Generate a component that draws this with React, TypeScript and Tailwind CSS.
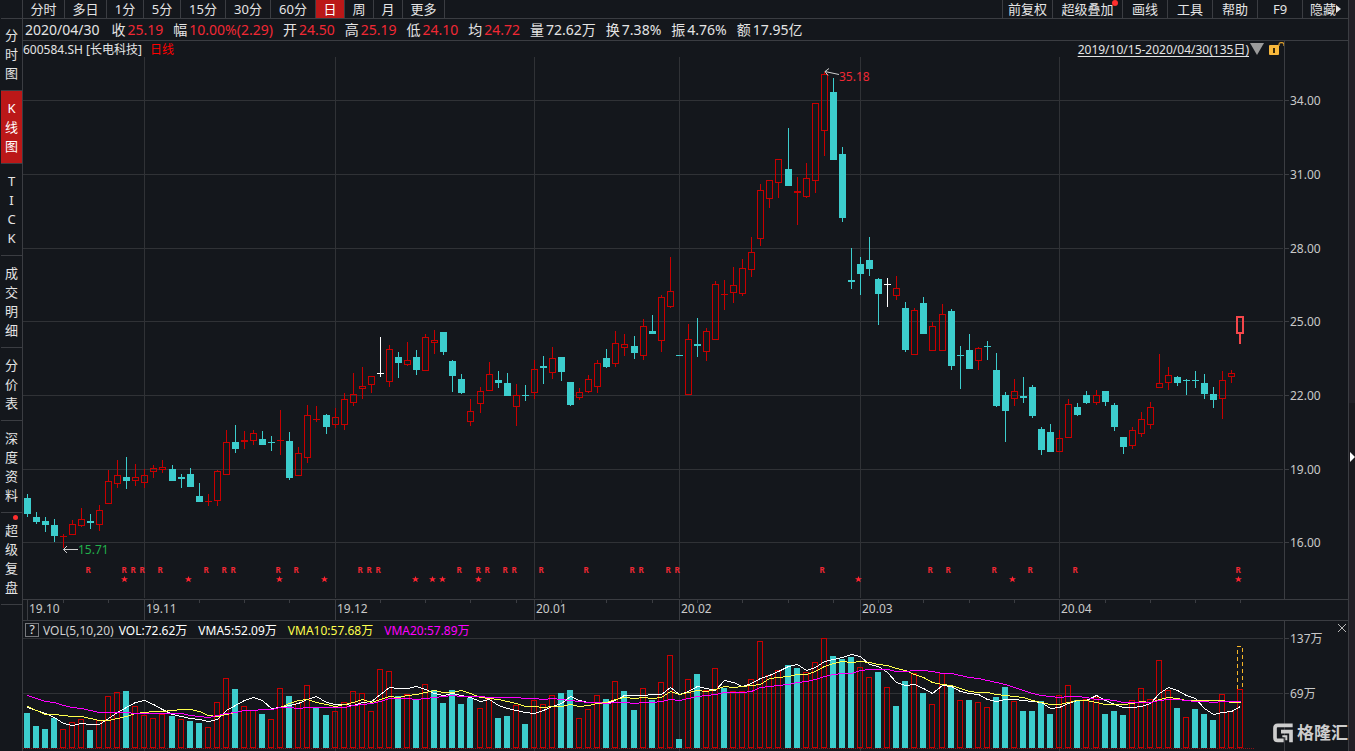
import clsx from "clsx";

type Tone = "r" | "c" | "w";
type Candle = [tone: Tone, high: number, top: number, bottom: number, low: number];

const UP = "#c80000";
const DOWN = "#3ccdcd";
const GRID = "#303236";
const LINE = "#3b3d42";

const toneColor: Record<Tone, string> = { r: UP, c: DOWN, w: "#ffffff" };

const periods = [
  { label: "分时", width: "w-[42px]" },
  { label: "多日", width: "w-[42px]" },
  { label: "1分", width: "w-[37px]" },
  { label: "5分", width: "w-[37px]" },
  { label: "15分", width: "w-[45px]" },
  { label: "30分", width: "w-[45px]" },
  { label: "60分", width: "w-[45px]" },
  { label: "日", width: "w-[29px]", active: true },
  { label: "周", width: "w-[29px]" },
  { label: "月", width: "w-[29px]" },
  { label: "更多", width: "w-[42px]" },
];

const tools = [
  { label: "前复权", width: "w-[50px]" },
  { label: "超级叠加", width: "w-[70px]", dot: true },
  { label: "画线", width: "w-[45px]" },
  { label: "工具", width: "w-[45px]" },
  { label: "帮助", width: "w-[45px]" },
  { label: "F9", width: "w-[45px]" },
  { label: "隐藏", width: "w-[46px]", arrow: true },
];

const views = [
  { label: "分时图" },
  { label: "K线图", active: true },
  { label: "TICK" },
  { label: "成交明细" },
  { label: "分价表" },
  { label: "深度资料" },
  { label: "超级复盘", dot: true },
];

const quotes = [
  { label: "收", value: "25.19", up: true },
  { label: "幅", value: "10.00%(2.29)", up: true },
  { label: "开", value: "24.50", up: true },
  { label: "高", value: "25.19", up: true },
  { label: "低", value: "24.10", up: true },
  { label: "均", value: "24.72", up: true },
  { label: "量", value: "72.62万" },
  { label: "换", value: "7.38%" },
  { label: "振", value: "4.76%" },
  { label: "额", value: "17.95亿" },
];

const candles: Candle[] = [
  ["c", 494, 498, 514, 517], ["c", 512, 517, 522, 524], ["c", 517, 521, 525, 532],
  ["c", 519, 525, 536, 542], ["r", 534, 536, 537, 548], ["r", 520, 524, 535, 535],
  ["r", 508, 519, 526, 527], ["c", 514, 521, 523, 529], ["r", 505, 510, 525, 531],
  ["r", 470, 481, 504, 504], ["r", 460, 475, 484, 488], ["c", 457, 477, 481, 489],
  ["r", 464, 477, 481, 486], ["r", 469, 475, 483, 488], ["r", 465, 468, 472, 478],
  ["r", 460, 467, 470, 473], ["c", 465, 469, 481, 481], ["c", 474, 477, 479, 488],
  ["c", 468, 474, 487, 487], ["c", 483, 496, 502, 502], ["r", 494, 501, 502, 506],
  ["r", 470, 471, 501, 506], ["r", 430, 442, 475, 475], ["c", 425, 442, 449, 453],
  ["r", 431, 440, 442, 449], ["r", 430, 433, 441, 445], ["c", 431, 439, 445, 445],
  ["c", 436, 442, 443, 451], ["r", 410, 440, 441, 455], ["c", 432, 441, 478, 480],
  ["r", 447, 453, 476, 476], ["r", 405, 415, 458, 463], ["r", 406, 419, 420, 422],
  ["c", 414, 415, 427, 434], ["r", 408, 417, 425, 428], ["r", 393, 399, 425, 430],
  ["r", 373, 394, 403, 406], ["r", 367, 386, 389, 399], ["r", 376, 376, 385, 393],
  ["w", 337, 373, 374, 377], ["r", 345, 349, 382, 387], ["c", 352, 357, 363, 378],
  ["r", 342, 360, 365, 366], ["c", 350, 357, 370, 375], ["r", 334, 337, 371, 371],
  ["r", 330, 340, 343, 354], ["c", 332, 332, 352, 355], ["c", 360, 361, 376, 392],
  ["c", 374, 379, 393, 394], ["r", 399, 411, 422, 426], ["r", 387, 391, 404, 413],
  ["r", 362, 374, 391, 391], ["c", 371, 380, 383, 388], ["c", 373, 383, 396, 396],
  ["r", 384, 395, 407, 426], ["c", 385, 395, 396, 401], ["r", 360, 369, 393, 399],
  ["c", 356, 366, 368, 384], ["r", 347, 358, 373, 379], ["c", 357, 357, 372, 381],
  ["c", 382, 382, 405, 406], ["r", 388, 392, 398, 400], ["r", 375, 379, 392, 393],
  ["r", 360, 363, 387, 393], ["c", 349, 358, 367, 368], ["r", 331, 343, 364, 367],
  ["r", 334, 344, 348, 356], ["c", 336, 346, 353, 359], ["r", 319, 326, 356, 360],
  ["c", 315, 331, 334, 334], ["r", 295, 297, 341, 352], ["r", 257, 291, 307, 308],
  ["c", 355, 355, 356, 356], ["r", 324, 339, 395, 395], ["c", 318, 344, 346, 357],
  ["r", 328, 331, 352, 361], ["r", 281, 284, 340, 340], ["r", 280, 294, 295, 310],
  ["r", 267, 285, 293, 303], ["r", 259, 268, 294, 296], ["r", 237, 252, 270, 277],
  ["r", 184, 190, 239, 246], ["r", 180, 180, 199, 208], ["r", 159, 159, 183, 198],
  ["c", 128, 169, 186, 186], ["r", 177, 191, 193, 225], ["r", 163, 178, 197, 198],
  ["r", 103, 103, 181, 193], ["r", 72, 74, 131, 156], ["c", 78, 92, 160, 160],
  ["c", 147, 154, 218, 222], ["c", 248, 280, 282, 289], ["c", 257, 264, 274, 295],
  ["c", 237, 260, 269, 276], ["c", 278, 279, 294, 325], ["w", 278, 284, 285, 307],
  ["r", 276, 288, 296, 300], ["c", 302, 308, 350, 352], ["r", 308, 310, 355, 355],
  ["c", 297, 303, 334, 334], ["r", 322, 326, 351, 351], ["r", 304, 314, 351, 351],
  ["c", 309, 311, 366, 370], ["c", 346, 355, 356, 389], ["c", 334, 350, 369, 369],
  ["r", 347, 348, 361, 370], ["c", 341, 346, 347, 360], ["c", 353, 370, 406, 407],
  ["c", 392, 395, 411, 442], ["r", 379, 391, 399, 406], ["c", 377, 396, 398, 403],
  ["c", 385, 387, 416, 418], ["c", 427, 429, 450, 455], ["c", 424, 432, 452, 452],
  ["r", 430, 438, 452, 452], ["r", 399, 404, 438, 438], ["c", 403, 407, 415, 416],
  ["c", 391, 395, 403, 404], ["r", 390, 395, 403, 405], ["c", 391, 391, 402, 406],
  ["c", 403, 405, 427, 431], ["c", 437, 437, 447, 454], ["r", 427, 430, 446, 449],
  ["r", 412, 419, 434, 437], ["r", 402, 407, 425, 429], ["r", 354, 383, 388, 388],
  ["r", 367, 375, 383, 390], ["c", 376, 377, 383, 386], ["c", 379, 380, 381, 395],
  ["c", 371, 380, 381, 388], ["c", 374, 383, 394, 399], ["c", 387, 394, 400, 408],
  ["r", 371, 380, 399, 419], ["r", 370, 373, 377, 383], ["r", 317, 317, 334, 344],
];

// one letter per session
const volumeTones =
  "cccc" + "rrrc" + "rrrcrrrr" + "crccrrrc" + "rrcrrcrrcc" + "rrrrrrrcrcrcccccrr" +
  "ccrcrrrccrrrcrccrcrrc" + "rcrrcrrrrrrccrrrcccrrcrccrcrrcrcrrcc" + "rccccrrcrrcccrrrrrcrcccrrr";

const volumes = [
  713, 726, 729, 718, 729, 722, 719, 730, 720, 696, 692, 691, 706, 715, 718, 714, 716, 719, 721, 723,
  727, 702, 678, 689, 706, 710, 714, 719, 688, 696, 703, 685, 708, 715, 711, 702, 691, 693, 711, 669,
  671, 696, 694, 699, 684, 690, 703, 690, 704, 698, 708, 698, 718, 716, 705, 724, 700, 704, 695, 693,
  690, 718, 709, 695, 699, 681, 691, 710, 688, 700, 682, 655, 739, 679, 674, 690, 668, 688, 691, 691,
  679, 641, 675, 670, 665, 668, 672, 662, 638, 656, 659, 657, 667, 677, 672, 687, 706, 681, 673, 693,
  704, 673, 686, 700, 700, 702, 707, 697, 687, 701, 711, 711, 701, 714, 695, 685, 700, 699, 697, 714,
  711, 715, 700, 688, 699, 660, 690, 708, 717, 709, 714, 720, 694, 711, 689,
];

const vma5 = [
  707, 710, 713, 717, 723, 725, 723, 724, 724, 718, 712, 707, 702, 700, 704, 709, 714, 716, 718, 719,
  721, 719, 710, 705, 700, 697, 700, 708, 707, 705, 703, 699, 696, 702, 704, 704, 705, 702, 701, 694,
  687, 688, 688, 686, 689, 693, 695, 693, 695, 697, 701, 699, 705, 708, 710, 712, 713, 710, 706, 703,
  696, 700, 702, 702, 703, 700, 695, 695, 695, 694, 694, 687, 694, 691, 686, 688, 690, 680, 682, 686,
  683, 678, 675, 671, 666, 664, 670, 667, 661, 659, 657, 654, 656, 664, 666, 672, 682, 685, 684, 688,
  693, 685, 686, 691, 693, 694, 699, 701, 699, 699, 700, 701, 702, 708, 707, 703, 700, 700, 695, 700,
  704, 707, 707, 706, 703, 693, 687, 690, 695, 698, 708, 714, 712, 711, 706,
];

const vma10 = [
  706, 710, 714, 714, 715, 716, 716, 718, 720, 720, 718, 716, 713, 712, 711, 711, 710, 709, 709, 711,
  715, 716, 714, 712, 710, 710, 709, 709, 707, 703, 700, 699, 702, 704, 706, 704, 702, 699, 702, 699,
  696, 697, 695, 694, 692, 690, 692, 692, 690, 693, 697, 698, 699, 701, 703, 706, 706, 707, 706, 706,
  704, 706, 705, 703, 702, 699, 697, 698, 697, 698, 697, 691, 694, 692, 690, 691, 689, 686, 687, 686,
  685, 684, 678, 677, 676, 674, 674, 671, 666, 663, 661, 662, 661, 662, 664, 665, 668, 670, 674, 677,
  682, 684, 685, 688, 691, 692, 692, 694, 695, 696, 697, 700, 702, 704, 704, 702, 700, 700, 702, 704,
  704, 704, 703, 701, 702, 699, 697, 698, 700, 700, 700, 700, 700, 702, 702,
];

const vma20 = [
  695, 698, 701, 702, 705, 707, 708, 710, 712, 712, 712, 712, 713, 713, 713, 713, 713, 713, 715, 716,
  717, 715, 713, 712, 710, 710, 709, 709, 707, 707, 708, 707, 707, 707, 707, 707, 705, 704, 703, 701,
  698, 698, 698, 699, 698, 697, 696, 695, 696, 696, 696, 697, 697, 697, 697, 698, 698, 699, 698, 699,
  700, 701, 702, 702, 703, 702, 702, 703, 702, 702, 701, 699, 700, 698, 696, 695, 694, 692, 692, 692,
  691, 687, 686, 685, 684, 682, 681, 679, 676, 674, 673, 673, 670, 669, 669, 669, 671, 671, 670, 670,
  671, 673, 673, 675, 677, 678, 680, 682, 684, 687, 690, 693, 695, 696, 697, 696, 696, 697, 699, 699,
  700, 702, 702, 702, 702, 700, 699, 699, 700, 701, 701, 702, 701, 701, 701,
];

const priceLevels = [
  { y: 100, label: "34.00" },
  { y: 174, label: "31.00" },
  { y: 248, label: "28.00" },
  { y: 321, label: "25.00" },
  { y: 395, label: "22.00" },
  { y: 469, label: "19.00" },
  { y: 542, label: "16.00" },
];

const months = [
  { index: 0, label: "19.10" },
  { index: 13, label: "19.11" },
  { index: 34, label: "19.12" },
  { index: 56, label: "20.01" },
  { index: 72, label: "20.02" },
  { index: 92, label: "20.03" },
  { index: 114, label: "20.04" },
];

const reports = [
  88, 124, 133, 142, 160, 206, 224, 233, 278, 296, 360, 369, 378, 459, 478, 487, 505, 514, 541, 586,
  632, 641, 668, 677, 822, 930, 948, 994, 1030, 1075, 1238,
];

const stars = [124, 188, 279, 324, 415, 432, 442, 478, 858, 1012, 1238];

const barX = (i: number) => 27 + 9 * i + Math.floor((i + 1) / 17);

const linePoints = (values: number[]) =>
  values.map((y, i) => `${barX(i) + 0.5},${y + 0.5}`).join(" ");

function Sidebar() {
  return (
    <nav className="w-[23px] shrink-0 border-r border-[#3b3d42] pl-px">
      <div className="h-[19px] border-b border-[#3b3d42]" />
      <div>
        {views.map(({ label, active, dot }) => (
          <button
            key={label}
            className={clsx(
              "relative flex w-full flex-col items-center border-b border-[#3b3d42] pt-2 pb-[7px] text-[13px] leading-[19px] first:pt-[7px]",
              active && "bg-[#bb1818] text-white",
            )}
          >
            {label.split("").map((char, i) => (
              <span key={i}>{char}</span>
            ))}
            {dot ? (
              <span className="absolute top-0.5 right-1 size-[5px] rounded-full bg-[#ff2e2e]" />
            ) : null}
          </button>
        ))}
      </div>
    </nav>
  );
}

function Toolbar() {
  return (
    <div className="flex h-[19px] justify-between border-b border-[#3b3d42] text-[13px] leading-[18px]">
      <div className="flex">
        {periods.map(({ label, width, active }) => (
          <button
            key={label}
            className={clsx(
              "shrink-0 border-r border-[#3b3d42] whitespace-nowrap",
              width,
              active && "bg-[#bb1818] text-white",
            )}
          >
            {label}
          </button>
        ))}
      </div>
      <div className="flex">
        {tools.map(({ label, width, dot, arrow }) => (
          <button
            key={label}
            className={clsx(
              "relative flex shrink-0 items-center justify-center border-l border-[#3b3d42] whitespace-nowrap",
              width,
            )}
          >
            {label}
            {arrow ? (
              <svg viewBox="0 0 5 8" className="h-2 w-[5px]">
                <path d="M0 0 5 4 0 8Z" fill="#e4e4e4" />
              </svg>
            ) : null}
            {dot ? (
              <span className="absolute top-0 right-1 size-1.5 rounded-full bg-[#ff2e2e]" />
            ) : null}
          </button>
        ))}
      </div>
    </div>
  );
}

function QuoteBar() {
  return (
    <div className="flex h-[22px] gap-[10px] border-b border-[#3b3d42] pl-0.5 text-[14px] leading-[22px] whitespace-nowrap">
      <span className="mr-0.5">2020/04/30</span>
      {quotes.map(({ label, value, up }) => (
        <span key={label} className="flex gap-0.5">
          <span>{label}</span>
          <span className={up ? "text-[#f02834]" : ""}>{value}</span>
        </span>
      ))}
    </div>
  );
}

function ChartTitle() {
  return (
    <div className="flex h-4 justify-between text-[12px] leading-[17px] whitespace-nowrap">
      <div className="flex gap-2">
        <span>600584.SH [长电科技]</span>
        <span className="text-[#ff0000]">日线</span>
      </div>
      <div className="flex items-center gap-px pr-[63px]">
        <button className="underline underline-offset-2">2019/10/15-2020/04/30(135日)</button>
        <svg viewBox="0 0 14 12" className="h-3 w-[14px]">
          <path d="M0 0h14L7 12Z" fill="#9b9b9b" />
        </svg>
        <svg viewBox="0 0 16 14" className="ml-1 h-[14px] w-4">
          <path d="M10 4V2.500Q10 .6 12.500 .6T15 2.500V4" fill="none" stroke="#d99c2b" strokeWidth="1.300" />
          <rect x="0" y="3" width="10" height="10" rx="1" fill="#f8b83c" />
          <path d="M4 6h2v5H4Z" fill="#3a2a08" />
        </svg>
      </div>
    </div>
  );
}

function CandleShape({ x, candle }: { x: number; candle: Candle }) {
  const [tone, high, top, bottom, low] = candle;
  const color = toneColor[tone];
  const hollow = tone === "r" && bottom - top > 2;

  return (
    <g fill={color}>
      <rect x={x} y={high} width={1} height={top - high} />
      <rect x={x} y={bottom} width={1} height={low - bottom} />
      {hollow ? (
        <rect x={x - 2.5} y={top + 0.5} width={6} height={bottom - top - 1} fill="none" stroke={color} />
      ) : (
        <rect x={x - 3} y={top} width={7} height={bottom - top} />
      )}
    </g>
  );
}

function PriceChart() {
  const last = candles.length - 1;

  return (
    <svg
      viewBox="23 57 1325 564"
      className="block h-auto w-full overflow-visible text-[12px]"
      shapeRendering="crispEdges"
    >
      {priceLevels.map(({ y, label }) => (
        <g key={label}>
          <rect x={23} y={y} width={1260} height={1} fill={GRID} />
          <rect x={1284} y={y} width={5} height={1} fill={LINE} />
          <text x={1290} y={y + 5} fill="#c9c9c9">{label}</text>
        </g>
      ))}
      {months.map(({ index, label }) => (
        <g key={label}>
          {index > 0 ? <rect x={barX(index)} y={57} width={1} height={541} fill={GRID} /> : null}
          <rect x={barX(index)} y={599} width={1} height={22} fill={LINE} />
          <text x={barX(index) + 2} y={613} fill="#c9c9c9">{label}</text>
        </g>
      ))}
      {candles.map((_, i) =>
        i % 5 === 4 ? <rect key={i} x={barX(i)} y={600} width={1} height={3} fill={LINE} /> : null,
      )}
      <rect x={1284} y={41} width={1} height={558} fill={LINE} />
      <rect x={23} y={599} width={1325} height={1} fill={LINE} />
      <rect x={23} y={620} width={1325} height={1} fill={LINE} />

      {candles.slice(0, last).map((candle, i) => (
        <CandleShape key={i} x={barX(i)} candle={candle} />
      ))}
      <g fill="none" stroke="#f5474b" strokeWidth={2}>
        <rect x={1237} y={317} width={6} height={16} />
        <path d="M1240 334V344" />
      </g>

      <g fill="none" stroke="#d0d0d0" shapeRendering="auto">
        <path d="M839 74.500 825 71.500M829 68.500 825 71.500 828 75.500" />
        <path d="M78 549.500H63.500M67 546 63.500 549.500 67 553" />
      </g>
      <text x={839} y={81} fill="#f02834">35.18</text>
      <text x={78} y={554} fill="#21b04b">15.71</text>

      {reports.map((x) => (
        <text key={x} x={x} y={573} textAnchor="middle" fill="#f02834" className="text-[8px] font-bold">
          R
        </text>
      ))}
      {stars.map((x) => (
        <path
          key={x}
          transform={`translate(${x} 579)`}
          d="M.5-3 1.400-.7H4L2 .8 2.800 3.200.5 1.800-1.800 3.200-1 .8-3-.7H-.4Z"
          fill="#ff2430"
          shapeRendering="auto"
        />
      ))}
    </svg>
  );
}

function VolumeHeader() {
  return (
    <div className="flex h-[17px] items-center justify-between px-0.5 text-[12px] leading-[17px] whitespace-nowrap">
      <div className="flex items-center pt-px">
        <button className="mr-1 size-[14px] border border-[#77797d] leading-3">?</button>
        <span className="mr-[5px] text-[#d0d0d0]">VOL(5,10,20)</span>
        <span className="mr-[11px] text-white">VOL:72.62万</span>
        <span className="mr-[11px] text-white">VMA5:52.09万</span>
        <span className="mr-[11px] text-[#ffff4d]">VMA10:57.68万</span>
        <span className="text-[#ff00ff]">VMA20:57.89万</span>
      </div>
      <button aria-label="关闭" className="pb-[3px]">
        <svg viewBox="0 0 8 8" className="size-2" stroke="#b8b8b8">
          <path d="M0 0 8 8M8 0 0 8" />
        </svg>
      </button>
    </div>
  );
}

function VolumeChart() {
  return (
    <svg
      viewBox="23 638 1325 113"
      className="block h-auto w-full overflow-visible text-[12px]"
      shapeRendering="crispEdges"
    >
      <rect x={23} y={638} width={1260} height={1} fill={GRID} />
      <rect x={23} y={693} width={1260} height={1} fill={GRID} />
      {months.slice(1).map(({ index }) => (
        <rect key={index} x={barX(index)} y={638} width={1} height={113} fill={GRID} />
      ))}
      <rect x={1284} y={621} width={1} height={130} fill={LINE} />
      <rect x={1284} y={638} width={5} height={1} fill={LINE} />
      <rect x={1284} y={693} width={5} height={1} fill={LINE} />
      <text x={1290} y={643} fill="#c9c9c9">137万</text>
      <text x={1290} y={698} fill="#c9c9c9">69万</text>

      {volumes.map((top, i) =>
        volumeTones[i] === "c" ? (
          <rect key={i} x={barX(i) - 3} y={top} width={6} height={748 - top} fill={DOWN} />
        ) : (
          <rect
            key={i}
            x={barX(i) - 2.5}
            y={top + 0.5}
            width={5}
            height={747 - top}
            fill="none"
            stroke={UP}
          />
        ),
      )}
      <path d="M23 748.500H1254" stroke="#8c1016" strokeDasharray="1 1" />
      <path d="M1237.500 689V646.500H1242.500V689" fill="none" stroke="#f5b428" strokeDasharray="4 3" />

      <g fill="none">
        <polyline points={linePoints(vma5)} stroke="#ffffff" />
        <polyline points={linePoints(vma10)} stroke="#ffff4d" />
        <polyline points={linePoints(vma20)} stroke="#ff00ff" />
      </g>
    </svg>
  );
}

function Watermark() {
  return (
    <div className="absolute right-0 bottom-1.5 flex items-center gap-1 text-[17px] leading-6 font-bold text-[#cdcdcd]">
      <svg viewBox="0 0 60 60" className="size-5" fill="none" stroke="currentColor" strokeWidth="11">
        <path d="M59 7H14Q6 7 6 15V44Q6 52 14 52H32" />
        <path d="M24 26H54V58" />
        <path d="M28 40H40V52" strokeWidth="6" />
      </svg>
      格隆汇
    </div>
  );
}

export default function App() {
  return (
    <div className="flex min-h-screen bg-[#14171c] font-['Noto_Sans','Noto_Sans_CJK_SC',sans-serif] text-[#e4e4e4]">
      <Sidebar />
      <main className="relative min-w-0 flex-1 border-r border-[#3b3d42]">
        <Toolbar />
        <QuoteBar />
        <ChartTitle />
        <PriceChart />
        <VolumeHeader />
        <VolumeChart />
        <Watermark />
      </main>
      <aside className="flex w-1.5 shrink-0 flex-col bg-[#222027] pt-[403px]">
        <button aria-label="展开" className="flex h-[107px] items-center justify-end bg-[#1a191e]">
          <svg viewBox="0 0 5 10" className="h-[10px] w-[5px]">
            <path d="M0 0 5 5 0 10Z" fill="#ffffff" />
          </svg>
        </button>
      </aside>
    </div>
  );
}
